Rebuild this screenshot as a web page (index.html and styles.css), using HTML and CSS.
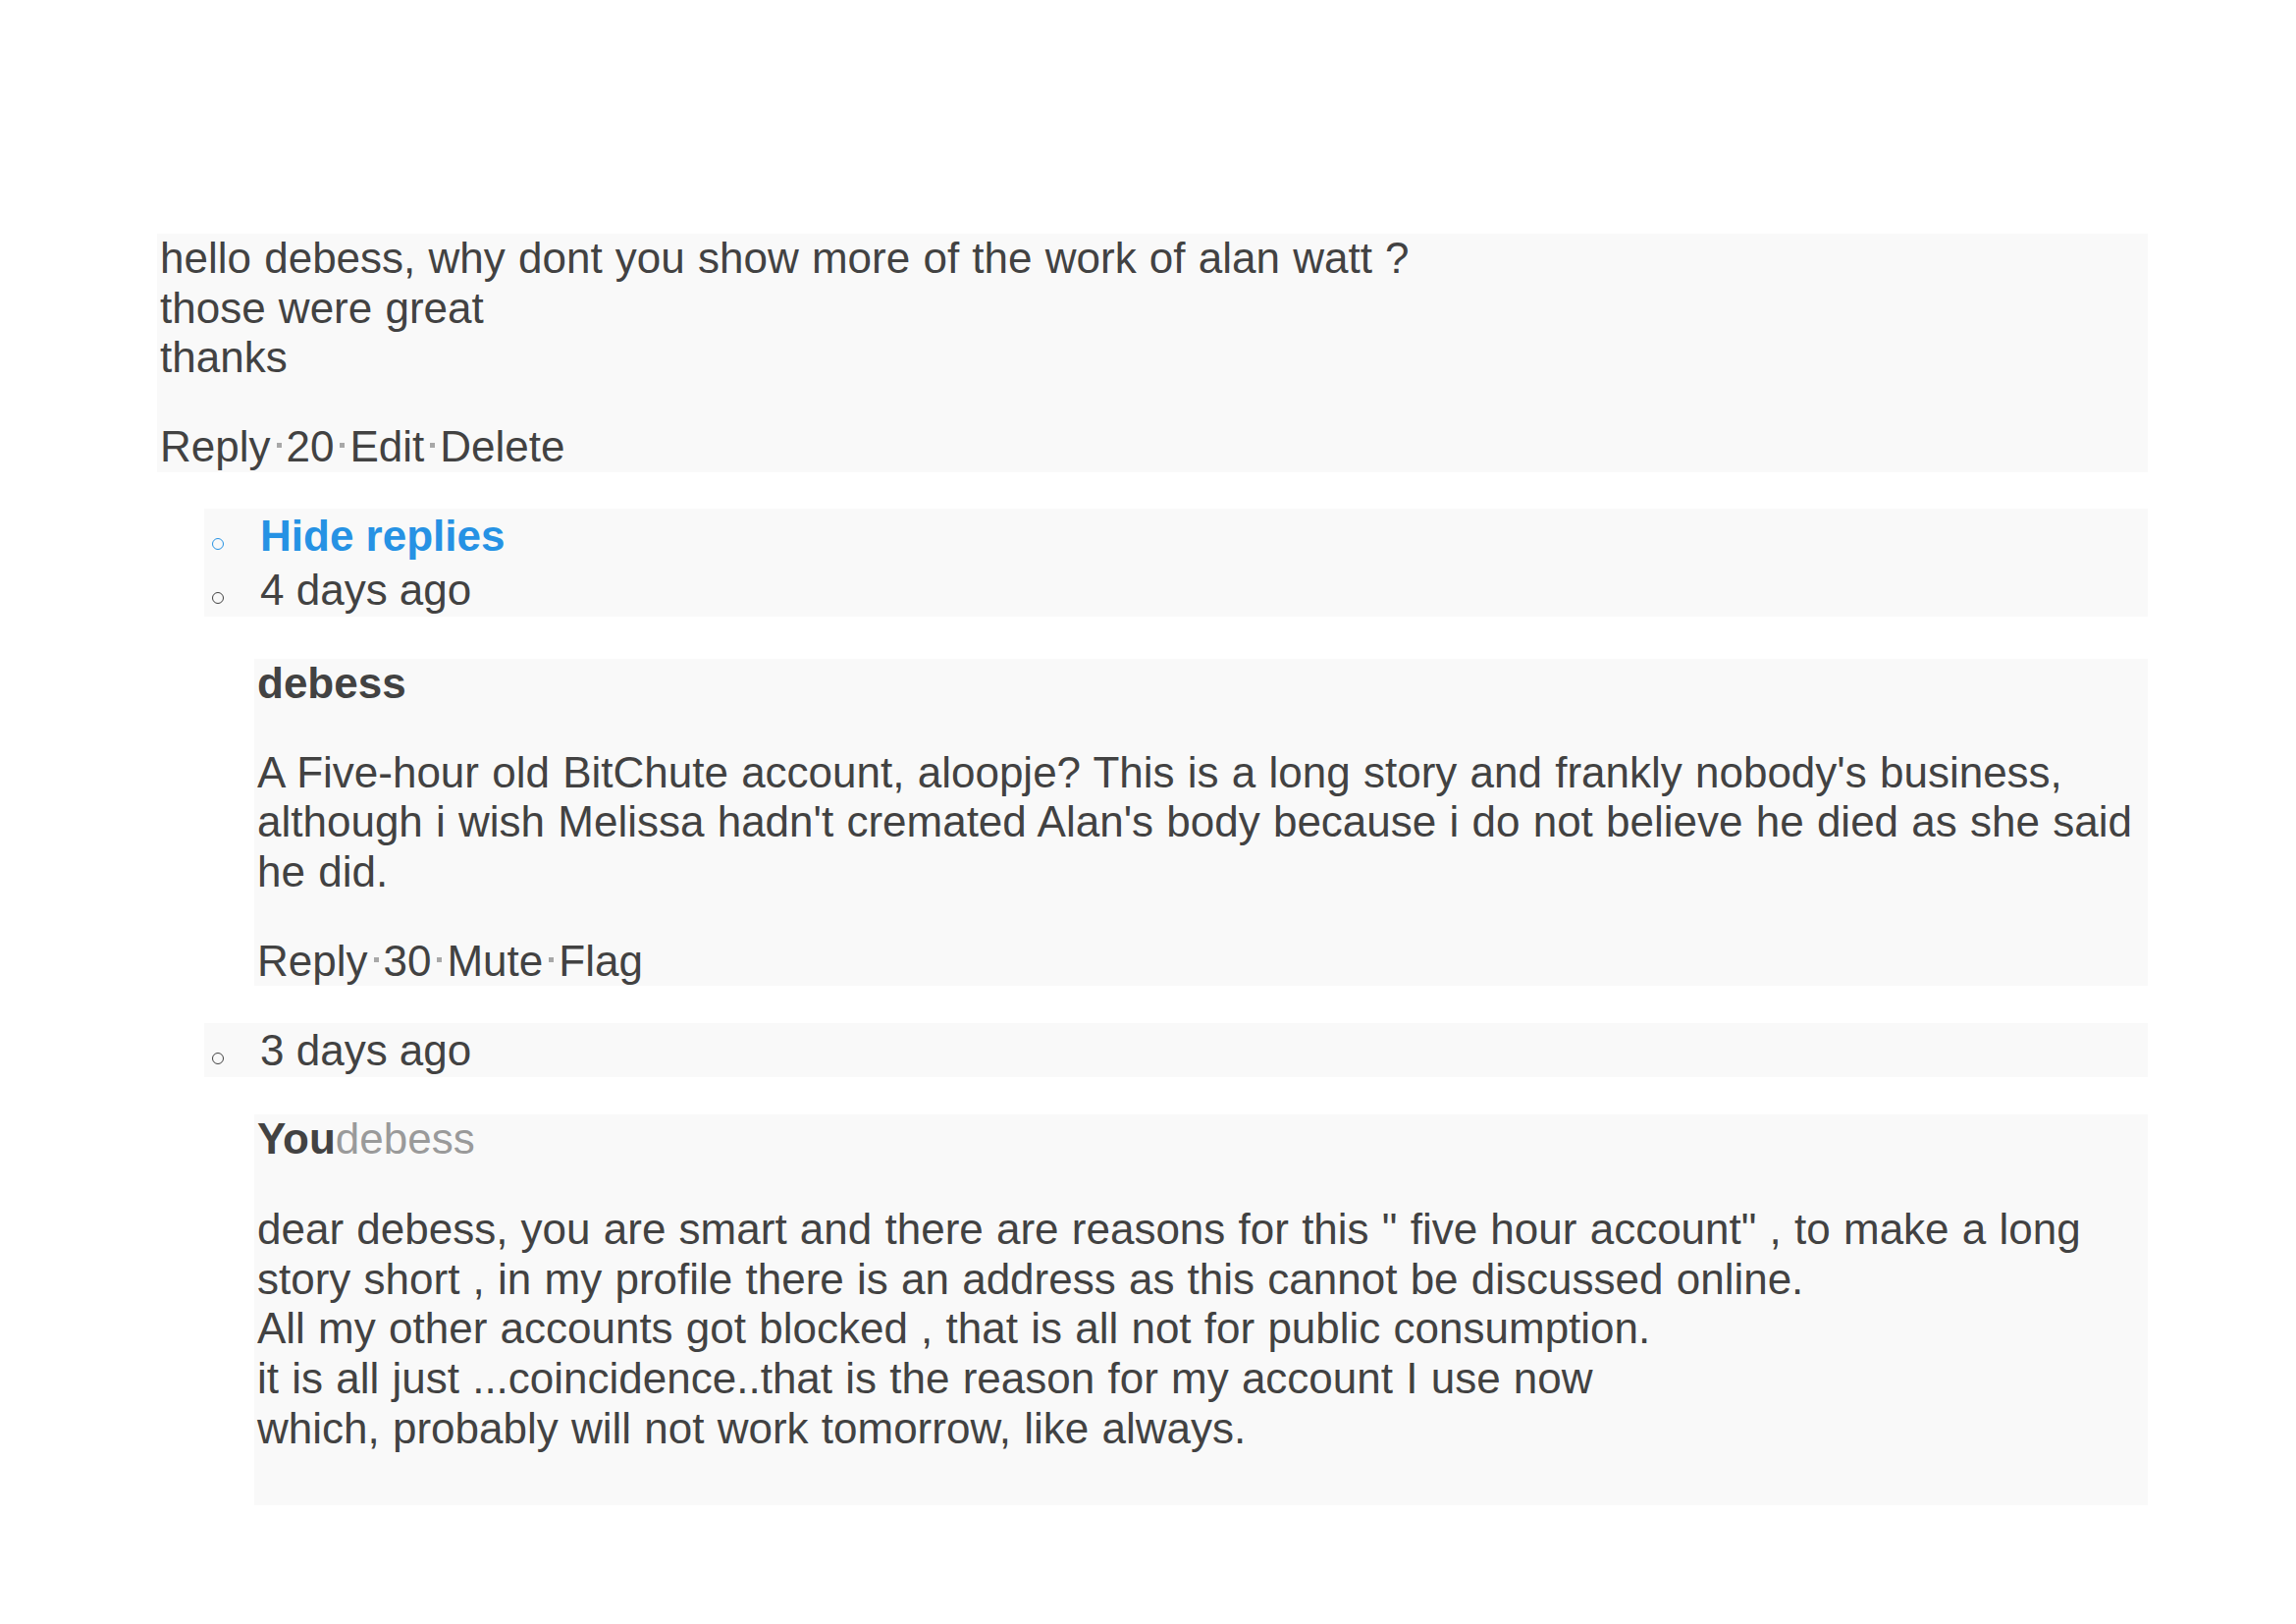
FILE: index.html
```html
<!DOCTYPE html>
<html lang="en">
<head>
<meta charset="utf-8">
<title>Comments</title>
<link rel="stylesheet" href="styles.css">
</head>
<body>
<main class="thread">
  <article class="comment">
    <div class="comment-body">hello debess, why dont you show more of the work of alan watt ?<br>those were great<br>thanks</div>
    <div class="actions"><span>Reply</span><span class="sep"></span><span>20</span><span class="sep"></span><span>Edit</span><span class="sep"></span><span>Delete</span></div>
  </article>

  <section class="replies">
    <ul class="meta-list">
      <li class="toggle">Hide replies</li>
      <li>4 days ago</li>
    </ul>

    <article class="comment reply">
      <div class="author"><b>debess</b></div>
      <div class="comment-body">A Five-hour old BitChute account, aloopje? This is a long story and frankly nobody's business, although i wish Melissa hadn't cremated Alan's body because i do not believe he died as she said he did.</div>
      <div class="actions"><span>Reply</span><span class="sep"></span><span>30</span><span class="sep"></span><span>Mute</span><span class="sep"></span><span>Flag</span></div>
    </article>

    <ul class="meta-list">
      <li>3 days ago</li>
    </ul>

    <article class="comment reply own">
      <div class="author"><b>You</b><span class="reply-to">debess</span></div>
      <div class="comment-body">dear debess, you are smart and there are reasons for this " five hour account" , to make a long story short , in my profile there is an address as this cannot be discussed online.<br>All my other accounts got blocked , that is all not for public consumption.<br>it is all just ...coincidence..that is the reason for my account I use now<br>which, probably will not work tomorrow, like always.</div>
    </article>
  </section>
</main>
</body>
</html>
```

FILE: styles.css
```css
html, body {
  margin: 0;
  padding: 0;
  background: #ffffff;
}

body {
  font-family: "Liberation Sans", Arial, sans-serif;
  font-size: 44px;
  line-height: 50.7px;
  color: #424242;
}

.thread {
  padding: 238px 151px 0 160px;
}

.comment {
  background: #f9f9f9;
  padding: 0 8px 0 3px;
  word-spacing: 1px;
}

.comment-body {
  margin: 0;
}

.author {
  margin-bottom: 40px;
}

.author b {
  font-weight: bold;
  color: #424242;
}

.reply-to {
  color: #9a9a9a;
}

.actions {
  margin-top: 40px;
}

.sep {
  display: inline-block;
  width: 5px;
  height: 5px;
  background: #a8a8a8;
  margin: 0 5px 0 6px;
  vertical-align: 14px;
}

.replies {
  margin-left: 48px;
}

.meta-list {
  list-style: none;
  margin: 37px 0 43px;
  padding: 0 0 0 8px;
  background: #f9f9f9;
  line-height: 55px;
}

.meta-list li::before {
  content: "";
  display: inline-block;
  width: 10px;
  height: 10px;
  border: 1px solid currentColor;
  border-radius: 50%;
  margin-right: 37px;
  vertical-align: 1px;
}

.meta-list li.toggle {
  color: #2692e4;
  font-weight: bold;
}

.reply {
  margin-left: 51px;
}

.reply + .meta-list {
  margin-top: 38px;
  margin-bottom: 38px;
}

.own .author {
  margin-bottom: 41px;
}

.own .comment-body {
  padding-bottom: 52px;
}
```
